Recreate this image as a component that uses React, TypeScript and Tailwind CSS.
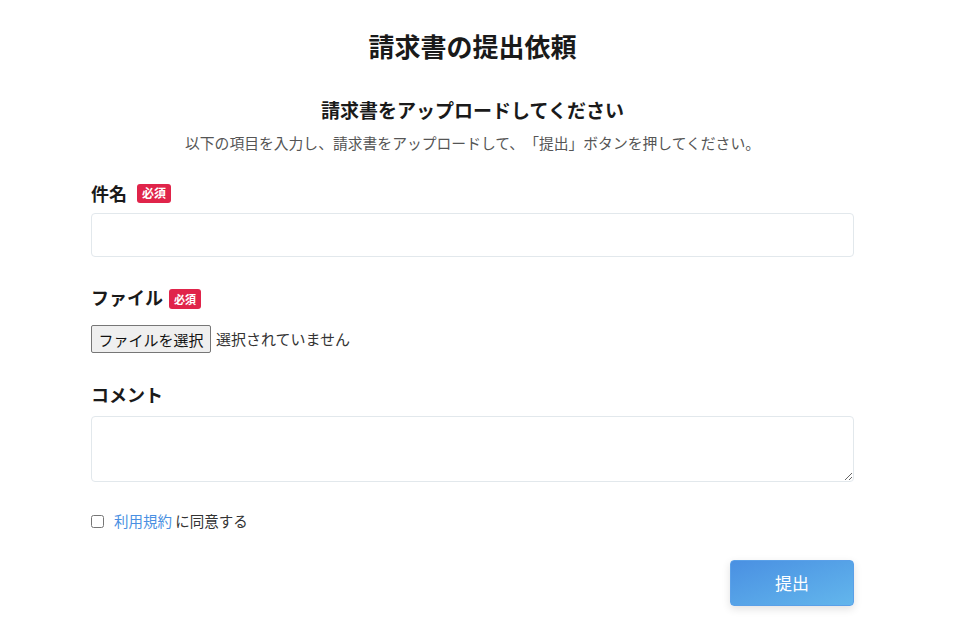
export default function App() {
  return (
    <div
      className="min-h-screen bg-white text-[#222]"
      style={{ fontFamily: '"Noto Sans CJK JP", "Noto Sans", sans-serif' }}
    >
      <div className="ml-[91px] w-[763px] pt-[30px]">
        <h1 className="text-center text-[26px] font-bold leading-[32px] text-[#1a1a1a]">
          請求書の提出依頼
        </h1>

        <h2 className="mt-[35px] text-center text-[19px] font-semibold leading-[26px] text-[#1a1a1a]">
          請求書をアップロードしてください
        </h2>
        <p className="mt-[10px] text-center text-[14.8px] leading-[20px] text-[#555] [text-spacing-trim:space-all]">
          以下の項目を入力し、請求書をアップロードして、「提出」ボタンを押してください。
        </p>

        <form className="block" onSubmit={(e) => e.preventDefault()}>
          <div className="mt-[28px] flex h-[24px] items-center">
            <label className="text-[18px] font-bold leading-[24px] text-[#1a1a1a]">件名</label>
            <span className="ml-[10px] inline-flex h-[19px] items-center rounded-[3px] bg-[#e0244a] px-[5px] text-[12px] font-bold leading-none text-white">
              必須
            </span>
          </div>
          <input
            type="text"
            className="mt-[8px] block h-[44px] w-full rounded-[4px] border border-[#e2e8ec] px-3 text-[14px] outline-none"
          />

          <div className="mt-[28px] flex h-[24px] items-center">
            <label className="text-[18px] font-bold leading-[24px] text-[#1a1a1a]">ファイル</label>
            <span className="ml-[6px] mt-[4px] inline-flex h-[20px] items-center rounded-[3px] bg-[#e0244a] px-[5px] text-[11px] font-bold leading-none text-white">
              必須
            </span>
          </div>
          <div className="mt-[16px] flex h-[28px] items-center">
            <button
              type="button"
              className="h-[28px] w-[120px] rounded-[2px] border border-[#767676] bg-[#efefef] text-[15px] leading-none text-[#111]"
            >
              ファイルを選択
            </button>
            <span className="ml-[5px] text-[15px] leading-[20px] text-[#333]">選択されていません</span>
          </div>

          <div className="mt-[29px]">
            <label className="text-[18px] font-bold leading-[24px] text-[#1a1a1a]">コメント</label>
          </div>
          <textarea className="mt-[9px] block h-[66px] w-full rounded-[4px] border border-[#e2e8ec] px-3 py-2 text-[14px] outline-none" />

          <div className="mt-[29px] flex h-[20px] items-center">
            <input type="checkbox" className="m-0 h-[13px] w-[13px]" />
            <span className="ml-[10px] text-[14.5px] leading-[20px] text-[#333]">
              <a className="text-[#4a90e2]">利用規約</a> に同意する
            </span>
          </div>

          <div className="mt-[29px] flex justify-end">
            <button
              type="submit"
              className="h-[46px] w-[124px] rounded-[4px] border border-[#5aa0e8] bg-gradient-to-br from-[#4a90e2] to-[#63b6ec] text-[17px] font-normal text-white shadow-[0_3px_8px_rgba(0,0,0,0.12)]"
            >
              提出
            </button>
          </div>
        </form>
      </div>
    </div>
  );
}
